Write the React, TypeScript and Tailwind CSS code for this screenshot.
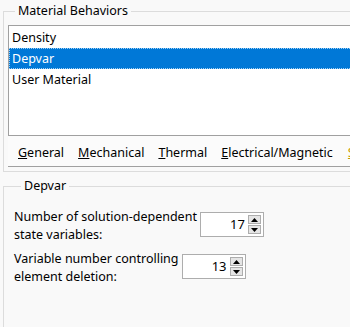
import React from "react";

const font = { fontFamily: '"Noto Sans", "Liberation Sans", sans-serif' };

function Spin({ value }: { value: string }) {
  return (
    <div className="flex items-center w-[64px] h-[25px] border border-[#adadad] bg-white pr-[2px]">
      <div className="flex-1 text-right pr-[3px] text-[13px] leading-none text-black">{value}</div>
      <div className="flex flex-col gap-[1px]">
        <div className="w-[13px] h-[9px] bg-[#e5e5e5] border border-[#adadad] flex items-center justify-center">
          <svg width="7" height="4" viewBox="0 0 7 4"><path d="M3.5 0 L7 4 L0 4 Z" fill="#000" /></svg>
        </div>
        <div className="w-[13px] h-[9px] bg-[#e5e5e5] border border-[#adadad] flex items-center justify-center">
          <svg width="7" height="4" viewBox="0 0 7 4"><path d="M0 0 L7 0 L3.5 4 Z" fill="#000" /></svg>
        </div>
      </div>
    </div>
  );
}

export default function App() {
  return (
    <div className="w-[350px] h-[327px] bg-[#f9f9f9] overflow-hidden text-[12.5px] text-black" style={font}>
      <fieldset className="ml-[3px] w-[360px] h-[172px] border border-[#dcdcdc] pl-[4px]">
        <legend className="ml-[7px] px-[3px] leading-[22px]">Material Behaviors</legend>
        <div className="mt-[3px] h-[111px] border border-[#a0a0a0] border-r-0 bg-white pt-[1px]">
          <div className="h-[21px] leading-[21px] pl-[3px]">Density</div>
          <div className="h-[21px] leading-[19px] pl-[2px] bg-[#0078d7] text-white border border-dotted border-[#9fd0f5]">Depvar</div>
          <div className="h-[21px] leading-[21px] pl-[3px]">User Material</div>
        </div>
        <div className="h-[31px] border-b border-[#a0a0a0] bg-[#fbfbfb] flex items-start pt-[8px] leading-[18px] gap-[14px] pl-[10px] whitespace-nowrap">
          <span><u>G</u>eneral</span>
          <span><u>M</u>echanical</span>
          <span><u>T</u>hermal</span>
          <span><u>E</u>lectrical/Magnetic</span>
          <span className="ml-[1px] text-[#c8a000]"><u>S</u></span>
        </div>
      </fieldset>
      <fieldset className="ml-[3px] mt-[3px] w-[360px] h-[170px] border border-[#dcdcdc] pl-[10px]">
        <legend className="ml-[7px] px-[3px] leading-[22px]">Depvar</legend>
        <div className="mt-[11px] flex items-start gap-[3px]">
          <div className="leading-[18px] whitespace-nowrap">Number of solution-dependent<br />state variables:</div>
          <div className="mt-[4px]"><Spin value="17" /></div>
        </div>
        <div className="mt-[6px] flex items-start gap-[3px]">
          <div className="leading-[18px] whitespace-nowrap">Variable number controlling<br />element deletion:</div>
          <div className="mt-[4px]"><Spin value="13" /></div>
        </div>
      </fieldset>
    </div>
  );
}
